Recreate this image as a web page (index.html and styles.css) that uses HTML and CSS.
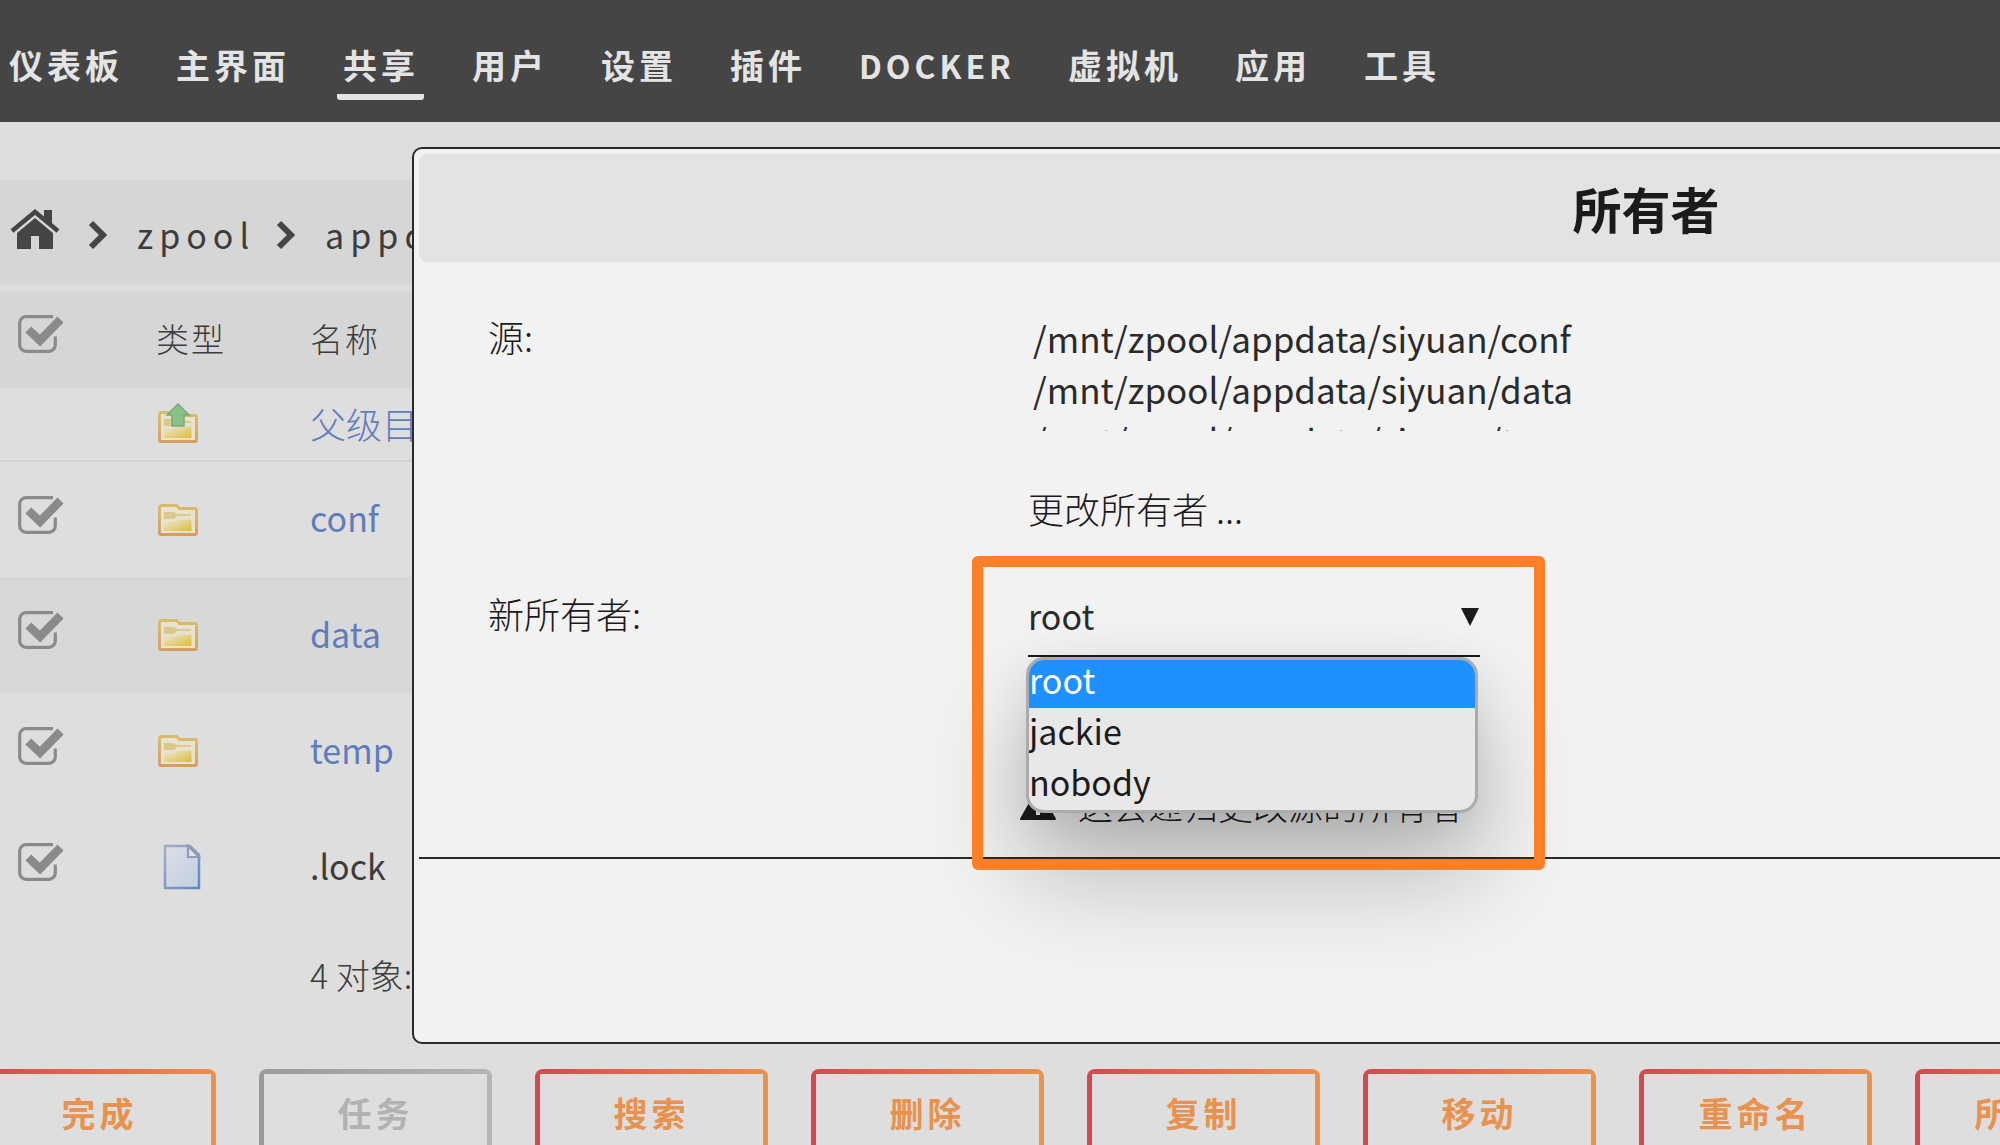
FILE: index.html
```html
<!DOCTYPE html>
<html lang="zh-CN">
<head>
<meta charset="utf-8">
<title>所有者</title>
<meta name="viewport" content="width=device-width, initial-scale=1">
<link rel="stylesheet" href="styles.css">
</head>
<body>
<svg class="defs" aria-hidden="true">
  <defs>
    <linearGradient id="paper" x1="0" y1="0" x2="1" y2="1">
      <stop offset="0" stop-color="#ece8dc"/><stop offset="1" stop-color="#dcbc34"/>
    </linearGradient>
    <linearGradient id="edge" x1="0" y1="0" x2="0" y2="1">
      <stop offset="0" stop-color="#d8bc68"/><stop offset="1" stop-color="#d89c62"/>
    </linearGradient>
    <linearGradient id="sheet" x1="0" y1="0" x2="1" y2="1">
      <stop offset="0" stop-color="#dcdfe4"/><stop offset="1" stop-color="#c2cfe4"/>
    </linearGradient>
    <linearGradient id="sheet-edge" x1="0" y1="0" x2="1" y2="1">
      <stop offset="0" stop-color="#a3afc2"/><stop offset="1" stop-color="#5f86c4"/>
    </linearGradient>
  </defs>
  <symbol id="check" viewBox="0 0 46 38">
    <path d="M35 1.700H8A6.300 6.300 0 0 0 1.700 8v22A6.300 6.300 0 0 0 8 36.300h23a6.300 6.300 0 0 0 6.300-6.300v-8.500" fill="none" stroke="#8a8a8a" stroke-width="3.200"/>
    <path d="M10.300 14.500L22 25.500 42.500 4.500" fill="none" stroke="#8a8a8a" stroke-width="8.500"/>
  </symbol>
  <symbol id="folder" viewBox="0 0 40 32">
    <path d="M1.500 29V3.500a2 2 0 0 1 2-2h15l3 3H37a1.500 1.500 0 0 1 1.500 1.500v23a1.500 1.500 0 0 1-1.500 1.500H3a1.500 1.500 0 0 1-1.500-1.500z" fill="#e8e2d0" stroke="url(#edge)" stroke-width="2.800"/>
    <path d="M6 8h10l3 2h14v2H19l-3 3H6z" fill="#dcc88c"/>
    <path d="M6 18h10l4-2.500h13.500V27H6z" fill="url(#paper)"/>
  </symbol>
  <symbol id="folder-up" viewBox="0 0 40 40">
    <use href="#folder" y="8" width="40" height="32"/>
    <path d="M20 1l11 11h-5v11H14V12H9z" fill="#8cc08a" stroke="#74ac78" stroke-width="1.500"/>
  </symbol>
  <symbol id="file" viewBox="0 0 38 46">
    <path d="M2 2h25l9 9v33H2z" fill="url(#sheet)" stroke="url(#sheet-edge)" stroke-width="2.500"/>
    <path d="M25 2v11h11z" fill="#e2e4e8" stroke="#8c9cba" stroke-width="2.200"/>
  </symbol>
</svg>

<header class="topbar">
  <nav class="nav">
    <a href="#">仪表板</a>
    <a href="#">主界面</a>
    <a href="#" class="active">共享</a>
    <a href="#">用户</a>
    <a href="#">设置</a>
    <a href="#">插件</a>
    <a href="#" class="latin">DOCKER</a>
    <a href="#">虚拟机</a>
    <a href="#">应用</a>
    <a href="#">工具</a>
  </nav>
</header>

<main class="browser">
  <div class="crumbs">
    <a href="#" aria-label="主目录"><svg class="home" viewBox="0 0 50 42"><path d="M25 10L43 25v16H29V28h-8v13H7V25z" fill="#454545"/><path d="M2 23L25 4l23 19" fill="none" stroke="#454545" stroke-width="4.500"/><path d="M34 2h8v15l-8-7z" fill="#454545"/></svg></a>
    <svg class="chev" viewBox="0 0 20 30"><path d="M3 3l12 12L3 27" fill="none" stroke="#454545" stroke-width="6"/></svg>
    <a href="#">zpool</a>
    <svg class="chev" viewBox="0 0 20 30"><path d="M3 3l12 12L3 27" fill="none" stroke="#454545" stroke-width="6"/></svg>
    <a href="#">appdata</a>
  </div>
  <table class="files">
    <thead>
      <tr><th class="c-check"><svg class="check"><use href="#check"/></svg></th><th class="c-type">类型</th><th>名称</th></tr>
    </thead>
    <tbody>
      <tr class="parent"><td></td><td><svg class="folder-up"><use href="#folder-up"/></svg></td><td><a href="#">父级目录</a></td></tr>
      <tr><td><svg class="check"><use href="#check"/></svg></td><td><svg class="folder"><use href="#folder"/></svg></td><td class="name"><a href="#">conf</a></td></tr>
      <tr class="alt"><td><svg class="check"><use href="#check"/></svg></td><td><svg class="folder"><use href="#folder"/></svg></td><td class="name"><a href="#">data</a></td></tr>
      <tr><td><svg class="check"><use href="#check"/></svg></td><td><svg class="folder"><use href="#folder"/></svg></td><td class="name"><a href="#">temp</a></td></tr>
      <tr><td><svg class="check"><use href="#check"/></svg></td><td><svg class="file"><use href="#file"/></svg></td><td class="name">.lock</td></tr>
    </tbody>
    <tfoot>
      <tr><td></td><td></td><td>4 对象:</td></tr>
    </tfoot>
  </table>
  <div class="actions">
    <button type="button">完成</button>
    <button type="button" disabled>任务</button>
    <button type="button">搜索</button>
    <button type="button">删除</button>
    <button type="button">复制</button>
    <button type="button">移动</button>
    <button type="button">重命名</button>
    <button type="button">所有者</button>
  </div>
</main>

<section class="dialog" role="dialog" aria-labelledby="dialog-title">
  <h1 class="dialog-title" id="dialog-title">所有者</h1>
  <dl class="form">
    <dt>源:</dt>
    <dd class="source">/mnt/zpool/appdata/siyuan/conf<br>/mnt/zpool/appdata/siyuan/data<br>/mnt/zpool/appdata/siyuan/temp</dd>
    <dt></dt>
    <dd class="action">更改所有者 ...</dd>
    <dt><label for="owner">新所有者:</label></dt>
    <dd class="owner">
      <select id="owner" class="owner-select">
        <option selected>root</option>
        <option>jackie</option>
        <option>nobody</option>
      </select>
      <svg class="caret" viewBox="0 0 18 18"><path d="M0 0h18L9 18z" fill="#1c1b1b"/></svg>
      <ul class="menu" role="listbox">
        <li role="option" aria-selected="true" class="selected">root</li>
        <li role="option">jackie</li>
        <li role="option">nobody</li>
      </ul>
      <div class="highlight"></div>
    </dd>
    <dt></dt>
    <dd class="warning"><svg viewBox="0 0 36 32"><path d="M18 1l17 30H1z" fill="#1c1b1b" stroke="#1c1b1b" stroke-width="2" stroke-linejoin="round"/><path d="M16 11h4v9h-4zM16 23h4v4h-4z" fill="#f2f2f2"/></svg>这会递归更改源的所有者</dd>
  </dl>
  <hr class="rule">
</section>
</body>
</html>
```
FILE: styles.css
```css
* {
  box-sizing: border-box;
}

body {
  position: relative;
  margin: 0;
  height: 100vh;
  overflow: hidden;
  background: #dedede;
  color: #3c3c3c;
  font: 300 34px/51px "Noto Sans CJK SC", "Noto Sans", sans-serif;
}

a {
  color: inherit;
  text-decoration: none;
}

svg {
  display: block;
}

.defs {
  position: absolute;
  width: 0;
  height: 0;
}

/* Top menu */
.topbar {
  height: 122px;
  padding: 36px 0 0 3px;
  background: #454545;
}

.nav {
  display: flex;
  gap: 42px;
  color: #e4e4e4;
  font-weight: 700;
  letter-spacing: 4px;
  line-height: 58px;
}

.nav a {
  flex: none;
  padding: 0 5px 0 6px;
  border-bottom: 6px solid transparent;
}

.nav .latin {
  font-size: 32px;
}

.nav .active {
  background: linear-gradient(#e4e4e4, #e4e4e4) 0 100% / 100% 6px no-repeat border-box;
  border-radius: 3px;
}

/* File browser */
.browser {
  padding-top: 58px;
}

.crumbs {
  display: flex;
  align-items: center;
  height: 105px;
  padding: 4px 10px 0;
  background: #d6d6d6;
  font-weight: 400;
  letter-spacing: 6px;
}

.home {
  width: 50px;
  height: 42px;
  margin: -12px 0 0;
}

.chev {
  width: 20px;
  height: 30px;
  margin: 0 29px 0 28px;
}

.crumbs a:nth-of-type(2) + .chev {
  margin-left: 21px;
}

.files {
  width: 100%;
  margin-top: 6px;
  border-collapse: collapse;
  table-layout: fixed;
}

.files th,
.files td {
  height: 116px;
  padding: 0;
  text-align: left;
  font-weight: 300;
}

.files th {
  height: 97px;
  padding-bottom: 2px;
  background: #d6d6d6;
  font-size: 33px;
  letter-spacing: 2px;
}

.files .c-check {
  width: 156px;
}

.files .c-type {
  width: 154px;
}

.files .parent td {
  height: 73px;
  padding-bottom: 2px;
  border-bottom: 2px solid #d4d4d4;
  font-size: 36px;
}

.files .name {
  padding-bottom: 4px;
  font-weight: 400;
}

.files .alt {
  background: #d8d8d8;
}

.files tfoot td {
  height: 102px;
  padding-bottom: 4px;
  font-size: 34px;
}

.files a {
  color: #5f7cbc;
}

.check {
  width: 46px;
  height: 38px;
  margin: 0 0 10px 18px;
}

.folder {
  width: 40px;
  height: 32px;
  margin-left: 2px;
}

.folder-up {
  width: 40px;
  height: 40px;
  margin-left: 2px;
}

.file {
  width: 38px;
  height: 46px;
  margin-left: 7px;
}

/* Action buttons */
.actions {
  display: flex;
  gap: 43px;
  margin: 42px 0 0 -17px;
}

.actions button {
  flex: none;
  width: 233px;
  height: 92px;
  padding: 0 0 5px;
  border: 0;
  border-radius: 8px;
  background:
    linear-gradient(90deg, #d24a4e, #e8924e) 0 0 / 100% 5px no-repeat,
    linear-gradient(90deg, #d24a4e, #e8924e) 0 100% / 100% 5px no-repeat,
    linear-gradient(#d24a4e, #d24a4e) 0 0 / 5px 100% no-repeat,
    linear-gradient(#e8924e, #e8924e) 100% 0 / 5px 100% no-repeat;
  color: #e8924e;
  font: 700 34px/51px "Noto Sans CJK SC", "Noto Sans", sans-serif;
  letter-spacing: 4px;
}

.actions button:disabled {
  background:
    linear-gradient(90deg, #9a9a9a, #b4b4b4) 0 0 / 100% 5px no-repeat,
    linear-gradient(90deg, #9a9a9a, #b4b4b4) 0 100% / 100% 5px no-repeat,
    linear-gradient(#9a9a9a, #9a9a9a) 0 0 / 5px 100% no-repeat,
    linear-gradient(#b4b4b4, #b4b4b4) 100% 0 / 5px 100% no-repeat;
  color: #b2b2b2;
}

/* Owner dialog, wider than the window and clipped by it */
.dialog {
  position: absolute;
  top: 147px;
  left: 412px;
  right: -44%;
  height: 897px;
  padding: 5px;
  border: 2px solid #2a2a2a;
  border-radius: 10px;
  background: #f2f2f2;
  color: #1c1b1b;
}

.dialog-title {
  margin: 0;
  border-radius: 8px;
  background: #e3e3e3;
  text-align: center;
  font-size: 49px;
  line-height: 108px;
}

.form {
  display: grid;
  grid-template-columns: 540px 1fr;
  margin: 0;
  padding: 50px 0 0 69px;
  font-size: 36px;
}

.form dt {
  line-height: 48px;
}

.form dd {
  margin: 0;
}

.form .source {
  height: 119px;
  padding-left: 5px;
  overflow: hidden;
  color: #2a2a2a;
  font-size: 35px;
  font-weight: 400;
}

.form .action {
  height: 158px;
  padding-top: 52px;
}

.owner {
  position: relative;
  width: 452px;
  height: 68px;
}

.owner-select {
  width: 100%;
  height: 67px;
  padding: 0 0 14px;
  border: 0;
  border-bottom: 2px solid #1c1b1b;
  appearance: none;
  background: transparent;
  color: #2a2a2a;
  font: inherit;
  font-size: 34px;
  font-weight: 400;
}

.caret {
  position: absolute;
  top: 19px;
  right: 1px;
  width: 18px;
  height: 18px;
}

.menu {
  position: absolute;
  top: 68px;
  left: -2px;
  z-index: 1;
  width: 452px;
  margin: 0;
  padding: 0;
  overflow: hidden;
  border: 3px solid #ababab;
  border-radius: 18px;
  background: #e8e8e8;
  box-shadow: 0 60px 100px rgba(0, 0, 0, 0.25), 0 10px 40px rgba(0, 0, 0, 0.08);
  font-size: 34px;
  font-weight: 400;
  line-height: 46px;
  list-style: none;
}

.menu li {
  height: 51px;
}

.menu .selected {
  height: 48px;
  background: #1e90ff;
  color: #fff;
  line-height: 40px;
}

.highlight {
  position: absolute;
  top: -33px;
  left: -56px;
  z-index: 2;
  width: 573px;
  height: 314px;
  border: 11px solid #ff7f27;
  border-radius: 6px;
}

.form .warning {
  display: flex;
  gap: 22px;
  margin-left: -8px;
  padding-top: 122px;
  font-size: 35px;
}

.warning svg {
  width: 36px;
  height: 32px;
  margin-top: 9px;
}

.rule {
  height: 2px;
  margin: 27px 0 0;
  border: 0;
  background: #2a2a2a;
}
```
